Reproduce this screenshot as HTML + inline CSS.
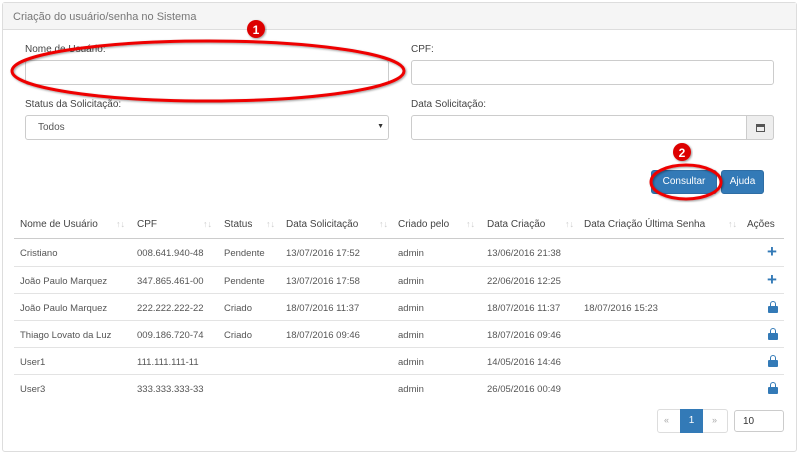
<!DOCTYPE html><html><head><meta charset="utf-8"><style>
*{box-sizing:border-box}body{margin:0;width:800px;height:440px;background:#fff;font-family:"Liberation Sans",sans-serif;font-size:10px;color:#555;position:relative;overflow:hidden}
.a{position:absolute}
.panel{left:2px;top:2px;width:795px;height:450px;border:1px solid #ddd;border-radius:3px}
.hd{left:3px;top:3px;width:793px;height:27px;background:#f5f5f5;border-bottom:1px solid #ddd;font-size:11px;color:#777;padding:8px 10px}
.inp{border:1px solid #ccc;border-radius:3px;background:#fff}
.lbl{font-size:10px;color:#444}
.btn{background:#337ab7;color:#fff;border:1px solid #2e6da4;border-radius:3px;text-align:center;line-height:22px;font-size:10px}
.th{top:219px;color:#444}
.si{color:#ccc;font-size:9px}
.row{position:relative;width:770px;border-top:1px solid #e3e3e3;height:27px}
.c{font-size:9.5px;color:#555}
.lk{position:absolute;left:754px;top:12px;width:10px;height:7px;background:#337ab7;border-radius:1px}
.lk:before{content:"";position:absolute;left:2px;top:-5px;width:6px;height:6px;border:1.5px solid #337ab7;border-bottom:none;border-radius:3px 3px 0 0;box-sizing:border-box}
.pl{left:753px;top:3px;color:#337ab7;font-size:17px;font-weight:bold}
</style></head><body>
<div class="a panel"></div>
<div class="a hd">Criação do usuário/senha no Sistema</div>
<div class="a lbl" style="left:25px;top:44px">Nome de Usuário:</div>
<div class="a inp" style="left:25px;top:60px;width:364px;height:25px"></div>
<div class="a lbl" style="left:411px;top:44px">CPF:</div>
<div class="a inp" style="left:411px;top:60px;width:363px;height:25px"></div>
<div class="a lbl" style="left:25px;top:99px">Status da Solicitação:</div>
<div class="a inp" style="left:25px;top:115px;width:364px;height:25px;padding:6px 12px;font-size:10px">Todos<span style="position:absolute;right:4px;top:7px;font-size:7px;color:#333">▼</span></div>
<div class="a lbl" style="left:411px;top:99px">Data Solicitação:</div>
<div class="a inp" style="left:411px;top:115px;width:363px;height:25px"></div>
<div class="a" style="left:746px;top:115px;width:28px;height:25px;background:#eee;border:1px solid #ccc;border-radius:0 3px 3px 0"><div class="a" style="left:9px;top:8px;width:9px;height:8px;border:1px solid #555;border-top:3px solid #555"></div></div>
<div class="a btn" style="left:651px;top:170px;width:66px;height:24px">Consultar</div>
<div class="a btn" style="left:721px;top:170px;width:43px;height:24px">Ajuda</div>
<div class="a th" style="left:20px">Nome de Usuário</div><div class="a th si" style="left:116px">↑↓</div>
<div class="a th" style="left:137px">CPF</div><div class="a th si" style="left:203px">↑↓</div>
<div class="a th" style="left:224px">Status</div><div class="a th si" style="left:266px">↑↓</div>
<div class="a th" style="left:286px">Data Solicitação</div><div class="a th si" style="left:379px">↑↓</div>
<div class="a th" style="left:398px">Criado pelo</div><div class="a th si" style="left:466px">↑↓</div>
<div class="a th" style="left:487px">Data Criação</div><div class="a th si" style="left:565px">↑↓</div>
<div class="a th" style="left:584px">Data Criação Última Senha</div><div class="a th si" style="left:728px">↑↓</div>
<div class="a th" style="left:747px">Ações</div>
<div class="a" style="left:14px;top:238px;width:770px;border-top:1px solid #ccc"></div>
<div class="a" style="left:14px;top:239px;width:770px">
<div class="row" style="border-top:none"><span class="a c" style="left:6px;top:9px">Cristiano</span><span class="a c" style="left:123px;top:9px">008.641.940-48</span><span class="a c" style="left:210px;top:9px">Pendente</span><span class="a c" style="left:272px;top:9px">13/07/2016 17:52</span><span class="a c" style="left:384px;top:9px">admin</span><span class="a c" style="left:473px;top:9px">13/06/2016 21:38</span><span class="a pl">+</span></div>
<div class="row"><span class="a c" style="left:6px;top:9px">João Paulo Marquez</span><span class="a c" style="left:123px;top:9px">347.865.461-00</span><span class="a c" style="left:210px;top:9px">Pendente</span><span class="a c" style="left:272px;top:9px">13/07/2016 17:58</span><span class="a c" style="left:384px;top:9px">admin</span><span class="a c" style="left:473px;top:9px">22/06/2016 12:25</span><span class="a pl">+</span></div>
<div class="row"><span class="a c" style="left:6px;top:9px">João Paulo Marquez</span><span class="a c" style="left:123px;top:9px">222.222.222-22</span><span class="a c" style="left:210px;top:9px">Criado</span><span class="a c" style="left:272px;top:9px">18/07/2016 11:37</span><span class="a c" style="left:384px;top:9px">admin</span><span class="a c" style="left:473px;top:9px">18/07/2016 11:37</span><span class="a c" style="left:570px;top:9px">18/07/2016 15:23</span><span class="lk"></span></div>
<div class="row"><span class="a c" style="left:6px;top:9px">Thiago Lovato da Luz</span><span class="a c" style="left:123px;top:9px">009.186.720-74</span><span class="a c" style="left:210px;top:9px">Criado</span><span class="a c" style="left:272px;top:9px">18/07/2016 09:46</span><span class="a c" style="left:384px;top:9px">admin</span><span class="a c" style="left:473px;top:9px">18/07/2016 09:46</span><span class="lk"></span></div>
<div class="row"><span class="a c" style="left:6px;top:9px">User1</span><span class="a c" style="left:123px;top:9px">111.111.111-11</span><span class="a c" style="left:384px;top:9px">admin</span><span class="a c" style="left:473px;top:9px">14/05/2016 14:46</span><span class="lk"></span></div>
<div class="row"><span class="a c" style="left:6px;top:9px">User3</span><span class="a c" style="left:123px;top:9px">333.333.333-33</span><span class="a c" style="left:384px;top:9px">admin</span><span class="a c" style="left:473px;top:9px">26/05/2016 00:49</span><span class="lk"></span></div>
</div>
<div class="a" style="left:657px;top:409px;width:71px;height:24px;border:1px solid #ddd;border-radius:3px"></div>
<div class="a" style="left:664px;top:415px;color:#aaa;font-size:9px">«</div>
<div class="a" style="left:680px;top:409px;width:23px;height:24px;background:#337ab7;color:#fff;text-align:center;line-height:24px">1</div>
<div class="a" style="left:712px;top:415px;color:#aaa;font-size:9px">»</div>
<div class="a inp" style="left:734px;top:410px;width:50px;height:22px;padding:5px 8px;color:#333">10</div>
<svg class="a" style="left:0;top:0" width="800" height="440">
<defs><filter id="s"><feDropShadow dx="1" dy="1" stdDeviation="1" flood-opacity=".4"/></filter></defs>
<ellipse cx="208" cy="71" rx="196" ry="30" fill="none" stroke="#e00" stroke-width="3" filter="url(#s)"/>
<ellipse cx="686" cy="182" rx="35" ry="17" fill="none" stroke="#e00" stroke-width="3" filter="url(#s)"/>
<circle cx="256" cy="29" r="9" fill="#d00" filter="url(#s)"/><text x="256" y="34" fill="#fff" font-size="12" font-weight="bold" text-anchor="middle" font-family="Liberation Sans">1</text>
<circle cx="682" cy="152" r="9" fill="#d00" filter="url(#s)"/><text x="682" y="157" fill="#fff" font-size="12" font-weight="bold" text-anchor="middle" font-family="Liberation Sans">2</text>
</svg>
</body></html>
